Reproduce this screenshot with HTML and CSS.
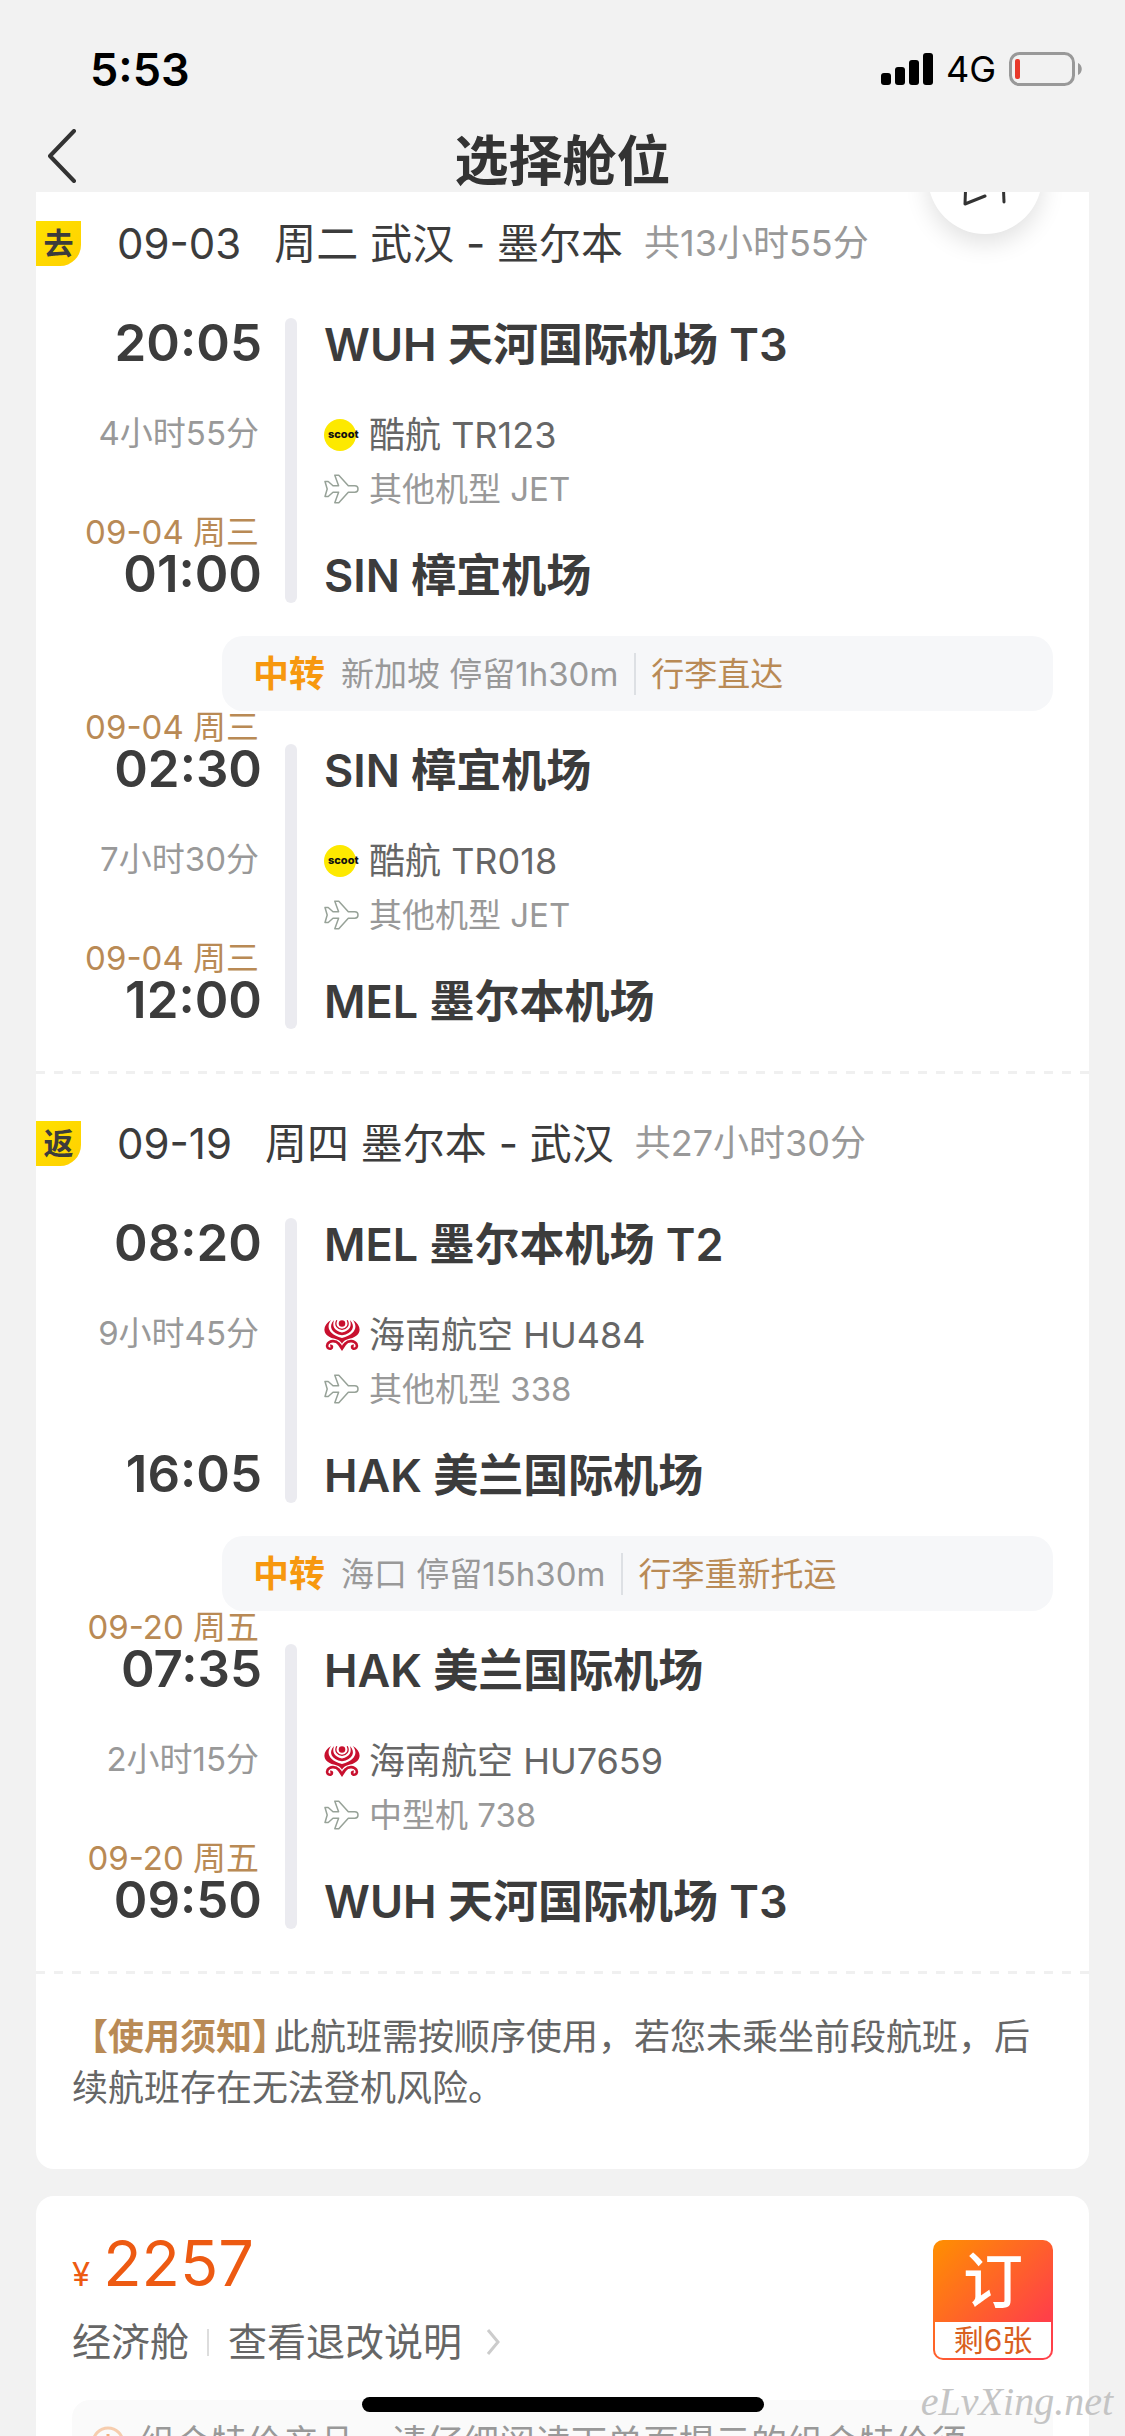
FILE: index.html
```html
<!DOCTYPE html>
<html lang="zh-CN">
<head>
<meta charset="utf-8">
<meta name="viewport" content="width=device-width, initial-scale=1">
<title>选择舱位</title>
<link rel="stylesheet" href="styles.css">
</head>
<body>
<svg class="sprite" aria-hidden="true">
  <symbol id="plane" viewBox="0 0 36 30">
    <path d="M1 7.500h3.200l4.800 4.300h5.600L10.800 1.200h4l9.500 10.600h6.500a3.200 3.200 0 0 1 0 6.400h-6.500l-9.500 10.600h-4l3.800-10.600H9L4.200 22.500H1l2.200-7.500z" fill="none" stroke="#97a298" stroke-width="1.500" stroke-linejoin="round"/>
  </symbol>
  <symbol id="hainan" viewBox="0 0 110 98">
    <g fill="#c8102e">
      <path d="M22 3C-8 20-6 52 30 60C45 64 50 68 55 76C60 68 65 64 80 60C116 52 118 20 88 3C104 22 98 46 55 58C12 46 6 22 22 3z"/>
      <path d="M31 3C12 22 22 44 55 50C88 44 98 22 79 3C86 20 80 36 55 41C30 36 24 20 31 3z"/>
      <path d="M36 70L55 98L74 70C63 71 58 75 55 82C52 75 47 71 36 70z"/>
      <circle cx="55" cy="14" r="10"/>
    </g>
    <g fill="none" stroke="#c8102e">
      <path d="M39 4C31 20 42 31 55 32C68 31 79 20 71 4" stroke-width="4"/>
      <path d="M46 76C34 64 18 66 11 76C6 86 12 92 20 91C27 88 25 81 19 82M64 76C76 64 92 66 99 76C104 86 98 92 90 91C83 88 85 81 91 82" stroke-width="8"/>
    </g>
  </symbol>
</svg>

<header class="topbar">
  <div class="status">
    <span class="clock">5:53</span>
    <div class="status-icons">
      <svg width="52" height="34" viewBox="0 0 52 34" aria-hidden="true"><rect x="0" y="21" width="10" height="12" rx="3"/><rect x="14" y="15" width="10" height="18" rx="3"/><rect x="28" y="8" width="10" height="25" rx="3"/><rect x="42" y="1" width="10" height="32" rx="3"/></svg>
      <span class="network">4G</span>
      <svg width="74" height="34" viewBox="0 0 74 34" aria-hidden="true"><rect x="1.500" y="1.500" width="63" height="31" rx="9" fill="none" stroke="#999" stroke-width="3"/><path d="M69 11c5 2 5 10 0 12z" fill="#999"/><rect x="6" y="7" width="5" height="20" rx="2" fill="#e8392b"/></svg>
    </div>
  </div>
  <div class="titlebar">
    <button class="back" aria-label="返回"><svg width="30" height="54" viewBox="0 0 30 54"><path d="M27 2L3 27L27 52" fill="none" stroke="#333" stroke-width="4" stroke-linecap="round" stroke-linejoin="round"/></svg></button>
    <h1>选择舱位</h1>
  </div>
</header>

<main>
  <div class="viewport">
    <button class="float" aria-label="分享"><svg width="60" height="60" viewBox="0 0 60 60" fill="none" stroke="#333" stroke-width="3" stroke-linecap="round" stroke-linejoin="round"><path d="M11 30L10 57L30 49"/><path d="M48 30L49 55"/></svg></button>

    <section class="card itinerary">
      <article class="trip">
        <header class="trip-head"><span class="badge">去</span><h2><span>09-03</span> <span>周二 武汉 - 墨尔本</span></h2><span class="total">共13小时55分</span></header>
        <div class="leg">
          <div class="times">
            <div class="depart"><div class="time">20:05</div></div>
            <div class="duration">4小时55分</div>
            <div class="arrive"><div class="date">09-04 周三</div><div class="time">01:00</div></div>
          </div>
          <div class="bar"></div>
          <div class="places"><h3>WUH 天河国际机场 T3</h3><p class="airline"><span class="scoot">scoot</span>酷航 TR123</p><p class="model"><svg class="logo"><use href="#plane"/></svg>其他机型 JET</p><h3>SIN 樟宜机场</h3></div>
        </div>
        <div class="transfer"><strong>中转</strong><span class="stop">新加坡 停留1h30m</span><span class="luggage">行李直达</span></div>
        <div class="leg">
          <div class="times">
            <div class="depart dated"><div class="date">09-04 周三</div><div class="time">02:30</div></div>
            <div class="duration">7小时30分</div>
            <div class="arrive"><div class="date">09-04 周三</div><div class="time">12:00</div></div>
          </div>
          <div class="bar"></div>
          <div class="places"><h3>SIN 樟宜机场</h3><p class="airline"><span class="scoot">scoot</span>酷航 TR018</p><p class="model"><svg class="logo"><use href="#plane"/></svg>其他机型 JET</p><h3>MEL 墨尔本机场</h3></div>
        </div>
      </article>

      <article class="trip">
        <header class="trip-head"><span class="badge">返</span><h2><span>09-19</span> <span>周四 墨尔本 - 武汉</span></h2><span class="total">共27小时30分</span></header>
        <div class="leg">
          <div class="times">
            <div class="depart"><div class="time">08:20</div></div>
            <div class="duration">9小时45分</div>
            <div class="arrive"><div class="time">16:05</div></div>
          </div>
          <div class="bar"></div>
          <div class="places"><h3>MEL 墨尔本机场 T2</h3><p class="airline"><svg class="logo"><use href="#hainan"/></svg>海南航空 HU484</p><p class="model"><svg class="logo"><use href="#plane"/></svg>其他机型 338</p><h3>HAK 美兰国际机场</h3></div>
        </div>
        <div class="transfer"><strong>中转</strong><span class="stop">海口 停留15h30m</span><span class="luggage">行李重新托运</span></div>
        <div class="leg">
          <div class="times">
            <div class="depart dated"><div class="date">09-20 周五</div><div class="time">07:35</div></div>
            <div class="duration">2小时15分</div>
            <div class="arrive"><div class="date">09-20 周五</div><div class="time">09:50</div></div>
          </div>
          <div class="bar"></div>
          <div class="places"><h3>HAK 美兰国际机场</h3><p class="airline"><svg class="logo"><use href="#hainan"/></svg>海南航空 HU7659</p><p class="model"><svg class="logo"><use href="#plane"/></svg>中型机 738</p><h3>WUH 天河国际机场 T3</h3></div>
        </div>
      </article>

      <p class="notice"><strong>【使用须知<span class="half">】</span></strong>此航班需按顺序使用，若您未乘坐前段航班，后续航班存在无法登机风险。</p>
    </section>
  </div>

  <section class="card fare">
    <div class="fare-row">
      <div>
        <p class="price"><span class="yen">¥</span>2257</p>
        <p class="cabin"><span>经济舱</span><a href="#rules">查看退改说明<svg width="14" height="28" viewBox="0 0 14 28"><path d="M2 2l10 12L2 26" fill="none" stroke="#ccc" stroke-width="3"/></svg></a></p>
      </div>
      <button class="book"><span class="book-main">订</span><span class="book-left">剩6张</span></button>
    </div>
    <p class="tip" id="rules"><svg width="36" height="36" viewBox="0 0 36 36"><circle cx="18" cy="18" r="15" fill="none" stroke="#f6cdae" stroke-width="3"/><path d="M18 9v12M18 24v3" stroke="#f0b080" stroke-width="3"/></svg>组合特价产品，请仔细阅读下单页提示的组合特价须</p>
  </section>
</main>
<div class="home"></div>
<div class="watermark">eLvXing.net</div>
</body>
</html>
```
FILE: styles.css
```css
* { box-sizing: border-box; margin: 0; padding: 0; }
html, body { height: 100%; }
body {
  position: relative;
  display: flex;
  flex-direction: column;
  overflow: hidden;
  background: #f2f2f2;
  color: #3c3c3c;
  font-family: Inter, "Noto Sans CJK SC", sans-serif;
}
button { border: 0; background: none; font: inherit; color: inherit; }
svg { display: block; flex: none; }
.sprite { position: absolute; width: 0; height: 0; }

.topbar { flex: none; }
.status { display: flex; justify-content: space-between; align-items: center; height: 138px; padding: 0 42px 0 90px; color: #000; }
.clock { font-size: 45px; font-weight: 600; }
.status-icons { display: flex; align-items: center; gap: 13px; }
.network { font-size: 36px; font-weight: 400; }
.titlebar { position: relative; display: flex; align-items: center; justify-content: center; height: 54px; padding-bottom: 6px; }
.titlebar h1 { font-size: 54px; line-height: 54px; font-weight: 600; color: #333; }
.back { position: absolute; left: 47px; top: -9px; }

main { flex: 1; min-height: 0; padding: 0 36px; display: flex; flex-direction: column; gap: 27px; }
.card { background: #fff; border-radius: 18px; }
.viewport { position: relative; flex: none; overflow: hidden; }
.itinerary { border-radius: 0 0 18px 18px; }
.float { position: absolute; right: 47px; top: -72px; width: 114px; height: 114px; border-radius: 50%; background: #fff; box-shadow: 0 9px 24px rgba(0, 0, 0, .12); display: flex; align-items: center; justify-content: center; }

.trip { padding: 47px 0 45px; background: repeating-linear-gradient(90deg, #f0f0f0 0 9px, transparent 9px 18px) 0 100% / 100% 3px no-repeat; }
.trip:first-child { padding-top: 29px; }
.trip-head { display: flex; align-items: center; height: 45px; margin-bottom: 52px; }
.badge { width: 45px; height: 45px; border-radius: 0 0 21px 0; background: linear-gradient(135deg, #ffe100, #ffd000); font-size: 30px; line-height: 45px; font-weight: 600; text-align: center; margin-right: 36px; }
.trip-head h2 { display: flex; gap: 33px; font-size: 42px; line-height: 45px; font-weight: 400; }
.total { margin-left: 21px; font-size: 36px; line-height: 45px; color: #999; }

.leg { display: flex; height: 285px; }
.times { width: 226px; margin-right: 23px; padding: 1px 0 5px; display: flex; flex-direction: column; text-align: right; white-space: nowrap; }
.dated { margin-top: -36px; }
.time { font-size: 51px; line-height: 48px; font-weight: 600; }
.duration { font-size: 33px; line-height: 48px; color: #999; margin: 42px 3px 0 0; }
.date { font-size: 33px; line-height: 36px; color: #b98a55; margin-right: 3px; }
.arrive { margin-top: auto; }
.bar { width: 12px; border-radius: 6px; background: #ebebf0; margin-right: 27px; }
.places { flex: 1; padding-top: 1px; }
.places h3 { font-size: 45px; line-height: 52px; font-weight: 600; }
.airline, .model { display: flex; align-items: center; gap: 9px; line-height: 54px; }
.airline { margin-top: 37px; font-size: 36px; color: #666; }
.model { margin-bottom: 34px; font-size: 33px; color: #999; }
.logo { width: 36px; height: 32px; }
.scoot { width: 32px; height: 32px; margin-right: 4px; padding-left: 4px; border-radius: 50%; background: #fde900; color: #111; font-size: 11px; line-height: 30px; font-weight: 800; }

.transfer { display: flex; align-items: center; height: 75px; margin: 33px 36px 33px 186px; padding-left: 31px; border-radius: 21px; background: #f6f7f9; font-size: 33px; line-height: 42px; color: #999; }
.transfer strong { font-size: 36px; font-weight: 700; color: #f7980f; }
.stop { margin-left: 16px; }
.luggage { margin-left: 16px; padding-left: 15px; border-left: 2px solid #dde0e4; color: #b98a55; }

.notice { padding: 38px 36px 55px; font-size: 36px; line-height: 51px; color: #666; }
.notice strong { margin-right: 4px; font-weight: 600; color: #b98a55; }
.half { font-feature-settings: "halt"; }

.fare { flex: none; padding: 28px 36px 0; }
.fare-row { display: flex; justify-content: space-between; align-items: flex-start; height: 149px; }
.price { font-size: 63px; line-height: 78px; color: #ed5a12; }
.yen { font-size: 33px; margin-right: 13px; }
.cabin { display: flex; align-items: center; margin-top: 2px; font-size: 39px; line-height: 54px; color: #666; }
.cabin a { display: flex; align-items: center; gap: 24px; margin-left: 18px; padding-left: 21px; color: inherit; text-decoration: none; background: linear-gradient(#ddd, #ddd) 0 50% / 2px 27px no-repeat; }
.book { display: flex; flex-direction: column; width: 120px; height: 120px; margin-top: 16px; border-radius: 10px; padding: 0 2px 2px; background: linear-gradient(135deg, #ff9000, #ff4048 80%); }
.book-main { width: 100%; height: 82px; font-size: 60px; line-height: 82px; font-weight: 500; color: #fff; }
.book-left { width: 100%; height: 36px; border-radius: 0 0 8px 8px; background: #fff; font-size: 30px; line-height: 36px; color: #d9601f; }
.tip { display: flex; align-items: center; gap: 13px; margin-top: 27px; padding: 19px 18px; border-radius: 18px; background: #fafafa; font-size: 36px; line-height: 48px; color: #999; white-space: nowrap; }

.home { position: absolute; left: 50%; bottom: 24px; width: 402px; height: 15px; margin-left: -201px; border-radius: 8px; background: #000; }
.watermark { position: absolute; right: 12px; bottom: 12px; font: italic 40px/44px "Liberation Serif", serif; color: #c4c4c4; }
```
